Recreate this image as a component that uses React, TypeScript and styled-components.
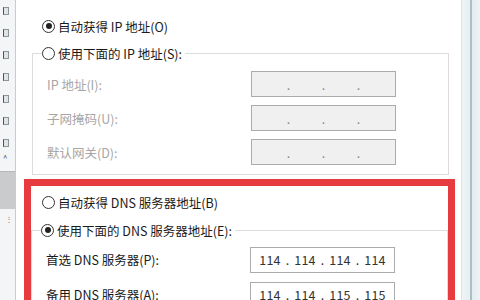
import styled, { createGlobalStyle } from "styled-components";

const GlobalStyle = createGlobalStyle`
  html, body {
    margin: 0;
    padding: 0;
    overflow: hidden;
    background: #ffffff;
  }
  body {
    font-family: "Noto Sans CJK SC", "Noto Sans", sans-serif;
    font-size: 12.5px;
    color: #1a1a1a;
  }
`;

type AddressProps = {
  parts?: string[];
  disabled?: boolean;
};

const Address = ({ parts, disabled }: AddressProps) => {
  const values = parts ?? ["", "", "", ""];
  return (
    <AddressBox $disabled={disabled}>
      {values.map((part, i) => (
        <Segment key={i}>
          {i > 0 && <Dot $disabled={disabled}>.</Dot>}
          <Octet>{part}</Octet>
        </Segment>
      ))}
    </AddressBox>
  );
};

type FieldProps = {
  label: string;
  parts?: string[];
  disabled?: boolean;
  tall?: boolean;
};

const Field = ({ label, parts, disabled, tall }: FieldProps) => (
  <Row $tall={tall}>
    <Label $disabled={disabled}>{label}</Label>
    <Address parts={parts} disabled={disabled} />
  </Row>
);

const App = () => {
  return (
    <>
      <GlobalStyle />
      <Window>
        <SideStrip>
          <Marks>
            {Array.from({ length: 7 }).map((_, i) => (
              <Mark key={i} />
            ))}
            <Caret>^</Caret>
          </Marks>
          <ShadeBlock />
          <TinyDots>⋮</TinyDots>
        </SideStrip>

        <Panel>
          <RadioRow>
            <Radio $checked />
            自动获得 IP 地址(O)
          </RadioRow>

          <Group>
            <Legend>
              <Radio />
              使用下面的 IP 地址(S):
            </Legend>
            <Field label="IP 地址(I):" disabled />
            <Field label="子网掩码(U):" disabled />
            <Field label="默认网关(D):" disabled />
          </Group>

          <Highlight>
            <RadioRow $inset>
              <Radio />
              自动获得 DNS 服务器地址(B)
            </RadioRow>
            <Group $dns>
              <Legend>
                <Radio $checked />
                使用下面的 DNS 服务器地址(E):
              </Legend>
              <Field
                label="首选 DNS 服务器(P):"
                parts={["114", "114", "114", "114"]}
                tall
              />
              <Field
                label="备用 DNS 服务器(A):"
                parts={["114", "114", "115", "115"]}
                tall
              />
            </Group>
          </Highlight>
        </Panel>

        <EdgeStrip />
      </Window>
    </>
  );
};

const Window = styled.div`
  display: flex;
  width: 480px;
  height: 300px;
  overflow: hidden;
`;

const SideStrip = styled.div`
  width: 15px;
  flex-shrink: 0;
  display: flex;
  flex-direction: column;
  background: #f3f5f6;
  border-right: 1px solid #bfd0d5;
`;

const Marks = styled.div`
  display: flex;
  flex-direction: column;
  gap: 14px;
  padding: 7px 0 0 3px;
`;

const Mark = styled.div`
  width: 4px;
  height: 6px;
  border: 1px solid #8d9498;
  border-left-color: #4c5358;
  background: #dfe4e6;
`;

const Caret = styled.div`
  font-size: 8px;
  line-height: 6px;
  color: #555;
  margin-top: -6px;
`;

const ShadeBlock = styled.div`
  margin-top: 10px;
  height: 37px;
  background: #c9cbcc;
  border-top: 1px solid #b4b8ba;
`;

const TinyDots = styled.div`
  font-size: 8px;
  color: #777;
  padding: 4px 0 0 5px;
`;

const Panel = styled.div`
  flex: 1;
  background: #ffffff;
  padding-top: 17px;
`;

const EdgeStrip = styled.div`
  width: 18px;
  flex-shrink: 0;
  border-left: 1px solid #dbe5e8;
  background: linear-gradient(
    to right,
    #eef4f6 0px,
    #e6eff2 8px,
    #a9c0c7 8px,
    #a9c0c7 10px,
    #e4ecef 10px,
    #eef3f5 18px
  );
`;

const RadioRow = styled.div<{ $inset?: boolean }>`
  display: flex;
  align-items: center;
  gap: 3px;
  height: 18px;
  margin-left: ${({ $inset }) => ($inset ? "11px" : "26px")};
  white-space: nowrap;
`;

const Radio = styled.span<{ $checked?: boolean }>`
  position: relative;
  display: inline-block;
  box-sizing: border-box;
  width: 13px;
  height: 13px;
  border: 1px solid #333;
  border-radius: 50%;
  background: #fff;
  flex-shrink: 0;

  &::after {
    content: "";
    display: ${({ $checked }) => ($checked ? "block" : "none")};
    position: absolute;
    left: 2.5px;
    top: 2.5px;
    width: 6px;
    height: 6px;
    border-radius: 50%;
    background: #222;
  }
`;

const Group = styled.fieldset<{ $dns?: boolean }>`
  box-sizing: border-box;
  width: 417px;
  margin: ${({ $dns }) => ($dns ? "10px 0 0 0" : "9px 0 0 16px")};
  padding: ${({ $dns }) => ($dns ? "3px 0 12px 0" : "5px 0 5px 0")};
  border: 1px solid #dcdcdc;
  min-width: 0;
`;

const Legend = styled.legend`
  display: flex;
  align-items: center;
  gap: 3px;
  height: 18px;
  margin-left: 9px;
  padding: 0 3px 0 0;
  white-space: nowrap;
`;

const Row = styled.div<{ $tall?: boolean }>`
  display: grid;
  grid-template-columns: 204px 145px;
  align-items: center;
  height: ${({ $tall }) => ($tall ? "35px" : "34px")};
  padding-left: 14px;
`;

const Label = styled.span<{ $disabled?: boolean }>`
  color: ${({ $disabled }) => ($disabled ? "#a6a6a6" : "#1a1a1a")};
  white-space: nowrap;
`;

const AddressBox = styled.div<{ $disabled?: boolean }>`
  box-sizing: border-box;
  width: 145px;
  height: 26px;
  display: flex;
  align-items: center;
  justify-content: center;
  border: 1px solid #ababab;
  background: ${({ $disabled }) => ($disabled ? "#f0f0f0" : "#ffffff")};
  color: #333;
`;

const Segment = styled.div`
  display: flex;
  align-items: center;
`;

const Octet = styled.span`
  width: 29px;
  text-align: center;
  letter-spacing: 0.3px;
`;

const Dot = styled.span<{ $disabled?: boolean }>`
  width: 6px;
  text-align: center;
  color: ${({ $disabled }) => ($disabled ? "#8a8a8a" : "#333")};
`;

const Highlight = styled.div`
  box-sizing: border-box;
  width: 431px;
  margin: 4px 0 0 8px;
  padding: 7px 0 20px;
  border: 7px solid #e63b3f;
`;

export default App;
